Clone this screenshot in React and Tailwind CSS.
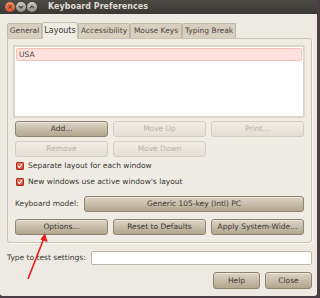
import React from "react";

const Btn = ({ children, disabled, className = "" }) => (
  <div
    className={
      "flex items-center justify-center rounded-[3px] border text-[7.5px] leading-none " +
      (disabled
        ? "border-[#d4cdc1] bg-gradient-to-b from-[#f0ece5] to-[#e4dfd6] text-[#b9b2a7] "
        : "border-[#8e846f] bg-gradient-to-b from-[#dcd4c5] to-[#b2a78f] text-[#3b3731] shadow-[inset_0_1px_0_#ece6da] ") +
      className
    }
  >
    {children}
  </div>
);

const Check = ({ label }) => (
  <div className="flex h-[16px] items-center gap-[4px] pl-[3px]">
    <div className="flex h-[8px] w-[8px] items-center justify-center rounded-[1px] border border-[#a8301c] bg-gradient-to-b from-[#f07a5c] to-[#d8402a]">
      <svg width="6" height="6" viewBox="0 0 6 6">
        <path d="M1 3 L2.5 4.6 L5 1.2" fill="none" stroke="#fff" strokeWidth="1.2" />
      </svg>
    </div>
    <span className="text-[7.5px] text-[#3b3731]">{label}</span>
  </div>
);

const tabs = [
  { name: "General", w: "w-[35px]" },
  { name: "Layouts", w: "w-[36px]", active: true },
  { name: "Accessibility", w: "w-[52px]" },
  { name: "Mouse Keys", w: "w-[52px]" },
  { name: "Typing Break", w: "w-[54px]" },
];

export default function App() {
  return (
    <div className="relative h-[298px] w-[320px] overflow-hidden bg-[#4a3d44] font-['DejaVu_Sans',sans-serif]">
      <div className="flex h-[296px] w-[317px] flex-col rounded-b-[3px] bg-[#edeae3]">
        {/* title bar */}
        <div className="flex h-[14px] items-center bg-gradient-to-b from-[#4b4a45] to-[#3a3935] pl-[5px]">
          <div className="flex gap-[1px]">
            <div className="flex h-[10px] w-[10px] items-center justify-center rounded-full bg-gradient-to-b from-[#f08a5a] to-[#d9532a] text-[7px] leading-none text-[#3a2a20]">
              ×
            </div>
            <div className="flex h-[10px] w-[10px] items-center justify-center rounded-full bg-gradient-to-b from-[#cfcbc2] to-[#8f8b84]">
              <svg width="6" height="6" viewBox="0 0 6 6">
                <path d="M1 2 L3 4 L5 2" fill="none" stroke="#3a3935" strokeWidth="1.1" />
              </svg>
            </div>
            <div className="flex h-[10px] w-[10px] items-center justify-center rounded-full bg-gradient-to-b from-[#cfcbc2] to-[#8f8b84]">
              <svg width="6" height="6" viewBox="0 0 6 6">
                <path d="M1 4 L3 2 L5 4" fill="none" stroke="#3a3935" strokeWidth="1.1" />
              </svg>
            </div>
          </div>
          <span className="ml-[11px] text-[8px] font-bold text-[#dfdbd2]">Keyboard Preferences</span>
        </div>

        {/* notebook */}
        <div className="flex flex-col pl-[7px] pr-[5px] pt-[8px]">
          <div className="flex h-[16px] items-end">
            {tabs.map((t) =>
              t.active ? (
                <div
                  key={t.name}
                  className={
                    "relative -mb-px flex h-[17px] items-center justify-center rounded-t-[2px] border border-b-0 border-[#c9c1b1] bg-[#efece6] text-[8px] text-[#3b3731] " +
                    t.w
                  }
                >
                  {t.name}
                </div>
              ) : (
                <div
                  key={t.name}
                  className={
                    "flex h-[15px] items-center justify-center rounded-t-[2px] border border-b-0 border-[#bfb6a5] bg-[#d7cfbf] text-[7.5px] text-[#4c4740] " +
                    t.w
                  }
                >
                  {t.name}
                </div>
              )
            )}
          </div>
          <div className="flex h-[205px] flex-col rounded-b-[3px] rounded-tr-[3px] border border-[#c9c1b1] bg-[#efece6] pl-[5px] pr-[6px] pt-[6px] shadow-[1px_1px_0_#fbfaf7]">
            <div className="h-[73px] rounded-[2px] border-2 border-[#dcd5c8] bg-white p-[1px]">
              <div className="flex h-[13px] items-center rounded-[2px] border border-[#f6bfb6] bg-[#ffe2dd] pl-[2px] text-[7.5px] text-[#4a3f3c]">
                USA
              </div>
            </div>
            <div className="mt-[3px] grid grid-cols-3 gap-x-[5px] gap-y-[4px] pl-[2px] pr-[1px]">
              <Btn className="h-[16px]">Add...</Btn>
              <Btn disabled className="h-[16px]">Move Up</Btn>
              <Btn disabled className="h-[16px]">Print...</Btn>
              <Btn disabled className="h-[16px]">Remove</Btn>
              <Btn disabled className="h-[16px]">Move Down</Btn>
            </div>
            <div className="mt-[1px] flex flex-col">
              <Check label="Separate layout for each window" />
              <Check label="New windows use active window's layout" />
            </div>
            <div className="mt-[6px] flex items-center pl-[2px] pr-[1px]">
              <span className="w-[69px] text-[7.5px] text-[#3b3731]">Keyboard model:</span>
              <Btn className="h-[16px] flex-1">Generic 105-key (Intl) PC</Btn>
            </div>
            <div className="mt-[7px] grid grid-cols-3 gap-x-[5px] pl-[2px] pr-[1px]">
              <Btn className="h-[16px]">Options...</Btn>
              <Btn className="h-[16px]">Reset to Defaults</Btn>
              <Btn className="h-[16px]">Apply System-Wide...</Btn>
            </div>
          </div>

          {/* test entry */}
          <div className="mt-[8px] flex items-center">
            <span className="w-[84px] text-[7.5px] text-[#3b3731]">Type to test settings:</span>
            <div className="h-[14px] flex-1 rounded-[2px] border border-[#bdb5a6] bg-white" />
          </div>

          <div className="mt-[7px] flex justify-end gap-[5px]">
            <Btn className="h-[17px] w-[47px]">Help</Btn>
            <Btn className="h-[17px] w-[47px]">Close</Btn>
          </div>
        </div>
      </div>

      {/* red annotation arrow */}
      <svg className="absolute left-0 top-0" width="320" height="298" viewBox="0 0 320 298">
        <line x1="28" y1="279" x2="44" y2="238" stroke="#e81a1a" strokeWidth="1.6" />
        <path d="M45 233 L47.5 242 L40.5 239.5 Z" fill="#e81a1a" />
      </svg>
    </div>
  );
}
